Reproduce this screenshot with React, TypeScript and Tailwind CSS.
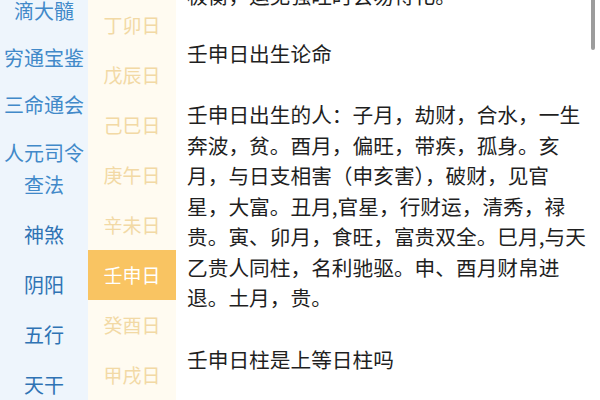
import React from 'react';

const books = [
  { label: ['滴大髓'], h: 'h-[47px]', tone: 'text-[#4189c9]' },
  { label: ['穷通宝鉴'], h: 'h-[47px]', tone: 'text-[#4189c9]' },
  { label: ['三命通会'], h: 'h-[47px]', tone: 'text-[#4189c9]' },
  { label: ['人元司令', '查法'], h: 'h-[82px]', tone: 'text-[#4189c9]' },
  { label: ['神煞'], h: 'h-[50px]', tone: 'text-[#2f73b4]' },
  { label: ['阴阳'], h: 'h-[50px]', tone: 'text-[#2f73b4]' },
  { label: ['五行'], h: 'h-[50px]', tone: 'text-[#2f73b4]' },
  { label: ['天干'], h: 'h-[50px]', tone: 'text-[#2f73b4]' },
];

const days = ['丁卯日', '戊辰日', '己巳日', '庚午日', '辛未日', '壬申日', '癸酉日', '甲戌日'];

const lines = [
  '壬申日出生的人：子月，劫财，合水，一生',
  '奔波，贫。酉月，偏旺，带疾，孤身。亥',
  '月，与日支相害（申亥害），破财，见官',
  '星，大富。丑月,官星，行财运，清秀，禄',
  '贵。寅、卯月，食旺，富贵双全。巳月,与天',
  '乙贵人同柱，名利驰驱。申、酉月财帛进',
  '退。土月，贵。',
];

export default function App() {
  const selected = '壬申日';

  return (
    <div
      className="relative flex h-[400px] w-[600px] overflow-hidden bg-white"
      style={{ fontFamily: '"Noto Sans CJK SC", "Noto Sans", sans-serif' }}
    >
      {/* book list */}
      <div className="w-[88px] shrink-0 bg-[#eef5fc]">
        <ul className="-mt-[13px]">
          {books.map((b) => (
            <li
              key={b.label.join('')}
              className={`flex flex-col items-center justify-center ${b.h} ${b.tone} text-[20px] leading-[32px]`}
            >
              {b.label.map((l) => (
                <span key={l}>{l}</span>
              ))}
            </li>
          ))}
        </ul>
      </div>

      {/* day list */}
      <div className="w-[88px] shrink-0 bg-[#fffbf1]">
        <ul>
          {days.map((d) => (
            <li
              key={d}
              className={`flex h-[50px] items-center justify-center text-[19px] ${
                d === selected ? 'bg-[#f9c462] text-white' : 'text-[#f2d9a5]'
              }`}
            >
              {d}
            </li>
          ))}
        </ul>
      </div>

      {/* article */}
      <div className="flex-1 pl-[11px] text-[20.7px] leading-[30.5px] text-[#1f1f1f]">
        <p className="-mt-[20px] mb-[27px] whitespace-nowrap">极衡，运见强旺时会易得化。</p>
        <p className="mb-[31px] whitespace-nowrap">壬申日出生论命</p>
        <p className="mb-[31px]">
          {lines.map((l) => (
            <span key={l} className="block whitespace-nowrap">
              {l}
            </span>
          ))}
        </p>
        <p className="whitespace-nowrap">壬申日柱是上等日柱吗</p>
      </div>

      {/* scrollbar thumb */}
      <div className="absolute right-[5px] top-0 h-[50px] w-[4px] rounded-b-full bg-[#9c9c9c]" />
    </div>
  );
}
